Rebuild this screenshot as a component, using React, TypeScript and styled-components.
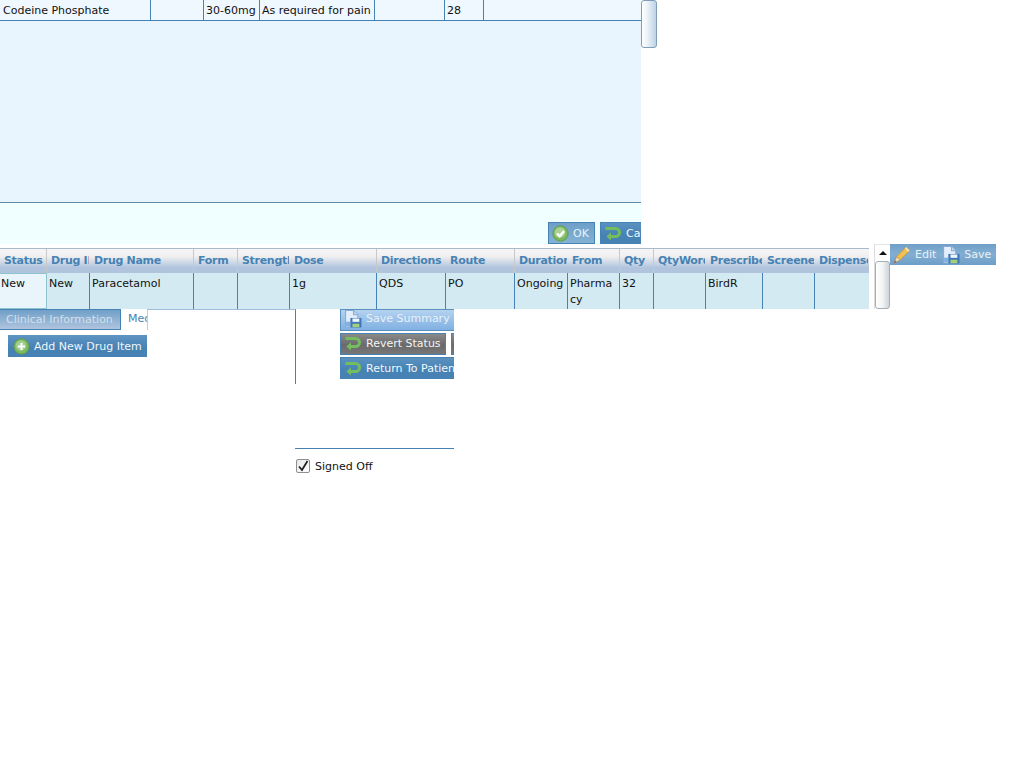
import styled, { createGlobalStyle } from "styled-components";

const COLUMNS = "47px 43px 104px 44px 52px 87px 69px 69px 53px 52px 34px 52px 57px 52px 54px";

const GlobalStyle = createGlobalStyle`
  html, body {
    margin: 0;
    padding: 0;
    background: #fff;
    font-family: "DejaVu Sans", Verdana, sans-serif;
    font-size: 11px;
    color: #111;
  }
`;

const Page = styled.div`
  width: 1034px;
  height: 778px;
  overflow: hidden;
`;

const TopSection = styled.div`
  display: flex;
  align-items: flex-start;
`;

const DialogPanel = styled.div`
  width: 641px;
  overflow: hidden;
`;

const DialogRow = styled.div`
  display: grid;
  grid-template-columns: 151px 53px 56px 115px 70px 39px 1fr;
  height: 20px;
  background: #f0f8ff;
  border-bottom: 1px solid #4682b4;
`;

const DialogCell = styled.div<{ $last?: boolean }>`
  padding-left: 2px;
  line-height: 21px;
  white-space: nowrap;
  overflow: hidden;
  border-right: ${(p) => (p.$last ? "none" : "1px solid #4682b4")};
  &:first-child {
    padding-left: 3px;
  }
`;

const DialogBody = styled.div`
  height: 181px;
  background: #e8f5ff;
  border-bottom: 1px solid #5b8aa6;
`;

const DialogFooter = styled.div`
  display: flex;
  gap: 5px;
  height: 22px;
  padding: 19px 0 0 548px;
  background: #f0ffff;
`;

const Thumb = styled.div<{ $height: number }>`
  box-sizing: border-box;
  width: 16px;
  height: ${(p) => p.$height}px;
  border: 1px solid #7f9db9;
  border-radius: 3px;
  background: linear-gradient(90deg, #fff 0%, #eef3f8 35%, #bcd2e6 100%);
`;

const toneStyles = {
  light: "background: linear-gradient(#6f9fc8, #84b2d4); border: 1px solid #4682b4; color: #eaf3fa;",
  steel: "background: linear-gradient(#5a92c0, #4682b4 60%); border: 1px solid #4682b4; color: #f2f7fb;",
  pale: "background: linear-gradient(#b4d2f0, #80b0e2); border: 1px solid #5a8fbe; color: #e8f0f8;",
  grey: "background: linear-gradient(#8a8a8a, #6a6a6a 55%, #777); border: 1px solid #4682b4; color: #f4f4f4;",
};

const ActionButton = styled.div<{ $tone: keyof typeof toneStyles; $width: number; $lift?: number }>`
  box-sizing: border-box;
  display: flex;
  flex: none;
  align-items: center;
  gap: 4px;
  width: ${(p) => p.$width}px;
  height: 22px;
  padding-left: 3px;
  padding-bottom: ${(p) => p.$lift ?? 0}px;
  white-space: nowrap;
  overflow: hidden;
  ${(p) => toneStyles[p.$tone]}
`;

const GridSection = styled.div`
  display: flex;
  align-items: flex-start;
  height: 65px;
`;

const DrugGrid = styled.div`
  width: 869px;
  margin-right: 5px;
  padding-top: 4px;
`;

const HeaderRow = styled.div`
  display: grid;
  grid-template-columns: ${COLUMNS};
  height: 25px;
  border-top: 1px solid #a9b9ca;
  background: linear-gradient(#f5f5f5 0%, #f0f0f0 30%, #b0c4de 78%);
  box-sizing: border-box;
`;

const HeaderCell = styled.div<{ $divider?: boolean }>`
  padding-left: 4px;
  font-weight: bold;
  letter-spacing: -0.3px;
  line-height: 23px;
  color: #4682b4;
  white-space: nowrap;
  overflow: hidden;
  border-right: 1px solid ${(p) => (p.$divider ? "#c8c8c8" : "transparent")};
`;

const DataRow = styled.div`
  display: grid;
  grid-template-columns: ${COLUMNS};
  height: 36px;
  background: #d4eaf3;
`;

const DataCell = styled.div<{ $selected?: boolean }>`
  padding: 3px 0 0 2px;
  line-height: 16px;
  border-right: 1px solid #4682b4;
  &:last-child {
    border-right: none;
  }
  ${(p) =>
    p.$selected &&
    "padding-left: 1px; background: #e9f5fb; border: 1px solid #8fc4cf; border-left: none; padding-top: 2px;"}
`;

const GridScroll = styled.div`
  box-sizing: border-box;
  flex: none;
  width: 16px;
  height: 65px;
  background: #fff;
  border-left: 1px solid #dcdcdc;
  border-top: 1px solid #e4e4e4;
`;

const ScrollArrow = styled.div`
  height: 16px;
  display: flex;
  align-items: center;
  justify-content: center;
  &::before {
    content: "";
    border-left: 4px solid transparent;
    border-right: 4px solid transparent;
    border-bottom: 4px solid #111;
  }
`;

const ScrollThumb = styled.div`
  box-sizing: border-box;
  width: 15px;
  height: 48px;
  border: 1px solid #a5adb5;
  border-radius: 3px;
  background: linear-gradient(90deg, #fff, #f2f4f5 50%, #ced4d9);
`;

const GridToolbar = styled.div`
  display: flex;
  align-items: center;
  gap: 6px;
  width: 106px;
  height: 21px;
  padding-left: 3px;
  box-sizing: border-box;
  background: linear-gradient(#6f9fc8, #82aed2 50%, #6d9ec8);
  color: #e8f1f8;
`;

const ToolbarItem = styled.div`
  display: flex;
  align-items: center;
  gap: 4px;
`;

const LowerSection = styled.div`
  display: flex;
  align-items: flex-start;
`;

const TabColumn = styled.div`
  width: 147px;
  flex: none;
  overflow: hidden;
`;

const TabStrip = styled.div`
  display: flex;
  height: 21px;
`;

const ClinicalTab = styled.div`
  box-sizing: border-box;
  flex: none;
  width: 121px;
  height: 21px;
  padding-left: 6px;
  line-height: 19px;
  white-space: nowrap;
  overflow: hidden;
  color: #d3e0ec;
  background: linear-gradient(#6f9fc8, #b0c4de);
  border: 1px solid #4682b4;
  border-left: none;
`;

const ActiveTab = styled.div`
  flex: none;
  padding-left: 7px;
  line-height: 20px;
  color: #4682b4;
  white-space: nowrap;
`;

const AddButtonRow = styled.div`
  padding: 5px 0 0 8px;
`;

const AddButton = styled.div`
  display: flex;
  align-items: center;
  gap: 4px;
  width: 150px;
  height: 22px;
  padding-left: 5px;
  white-space: nowrap;
  color: #f0f5fa;
  background: linear-gradient(#5e94c2, #4682b4 60%);
`;

const MissingPane = styled.div`
  box-sizing: border-box;
  flex: none;
  width: 149px;
  height: 75px;
  margin-right: -1px;
  background: #fff;
  border-top: 1px solid #9cc0dc;
  border-right: 1px solid #4682b4;
  position: relative;
  &::before {
    content: "";
    position: absolute;
    left: 0;
    top: 0;
    width: 1px;
    height: 20px;
    background: #b8d2e6;
  }
`;

const SummaryColumn = styled.div`
  flex: none;
  width: 159px;
  overflow: hidden;
`;

const ButtonStack = styled.div`
  display: flex;
  flex-direction: column;
  gap: 2px;
  height: 139px;
  padding-left: 45px;
  box-sizing: border-box;
`;

const ButtonLine = styled.div`
  display: flex;
  gap: 5px;
`;

const SignOffBar = styled.div`
  display: flex;
  align-items: center;
  gap: 5px;
  height: 36px;
  padding-left: 1px;
  border-top: 1px solid #4682b4;
  box-sizing: border-box;
`;

const CheckBox = styled.div`
  box-sizing: border-box;
  width: 14px;
  height: 14px;
  margin-top: -2px;
  border: 1px solid #8e8f8f;
  border-radius: 2px;
  background: linear-gradient(135deg, #e8e8e8, #fff);
`;

const CheckIcon = () => (
  <svg width="17" height="17" viewBox="0 0 16 16">
    <circle cx="8" cy="8" r="7.2" fill="#7cb860" stroke="#5c9a48" strokeWidth="0.8" />
    <circle cx="7.5" cy="7" r="5" fill="#a9d296" />
    <path d="M4.8 8l2.4 2.6L11.4 5.6" fill="none" stroke="#fff" strokeWidth="2.2" />
  </svg>
);

const PlusIcon = () => (
  <svg width="17" height="17" viewBox="0 0 16 16">
    <circle cx="8" cy="8" r="7.2" fill="#7cb860" stroke="#5c9a48" strokeWidth="0.8" />
    <circle cx="7.5" cy="7" r="5" fill="#a0ce8c" />
    <path d="M8 4.6v6.8M4.6 8h6.8" stroke="#fff" strokeWidth="2" />
  </svg>
);

const ReturnIcon = () => (
  <svg width="18" height="16" viewBox="0 0 18 16">
    <path
      d="M1.5 3.5h10a3.8 3.8 0 0 1 0 8H5"
      fill="none"
      stroke="#74bd5e"
      strokeWidth="3"
    />
    <path d="M7 7.2L2.4 11.5 7 15.6z" fill="#74bd5e" />
  </svg>
);

const SaveIcon = () => (
  <svg width="18" height="18" viewBox="0 0 17 17">
    <path d="M1.5 .5h7.5l4 4v11.5H1.5z" fill="#e4eefa" stroke="#86a9d6" />
    <path d="M9 .5v4h4" fill="#c2d6f0" stroke="#86a9d6" />
    <rect x="2" y="11" width="4" height="4.5" fill="#7fb0e6" />
    <rect x="6" y="7.5" width="10.5" height="9" fill="#3f78b8" />
    <rect x="8" y="8" width="6.5" height="3.2" fill="#eef4fb" />
    <rect x="8" y="13" width="6.5" height="3.2" fill="#a6d078" />
  </svg>
);

const PencilIcon = () => (
  <svg width="18" height="18" viewBox="0 0 17 17">
    <path d="M3.5 10L12.5 1l3.2 3.2L6.7 13.2z" fill="#f0c050" stroke="#cf9830" strokeWidth="0.8" />
    <path d="M12.5 1l3.2 3.2-1.4 1.4-3.2-3.2z" fill="#f6e2ae" />
    <path d="M3.5 10L1 16l6-2.8z" fill="#f2dcb8" stroke="#a88858" strokeWidth="0.6" />
    <path d="M1.9 13.8L1 16l2.3-1z" fill="#a04030" />
  </svg>
);

const gridHeaders: [string, boolean][] = [
  ["Status", true],
  ["Drug ID", false],
  ["Drug Name", true],
  ["Form", true],
  ["Strength", false],
  ["Dose", true],
  ["Directions", false],
  ["Route", true],
  ["Duration", false],
  ["From", true],
  ["Qty", true],
  ["QtyWords", false],
  ["Prescriber", false],
  ["Screened", false],
  ["Dispensed", false],
];

const gridValues = ["New", "New", "Paracetamol", "", "", "1g", "QDS", "PO", "Ongoing", "Pharma\u200Bcy", "32", "", "BirdR", "", ""];

const topRowValues = ["Codeine Phosphate", "", "30-60mg", "As required for pain", "", "28", ""];

export default function App() {
  return (
    <Page>
      <GlobalStyle />
      <TopSection>
        <DialogPanel>
          <DialogRow>
            {topRowValues.map((value, i) => (
              <DialogCell key={i} $last={i === topRowValues.length - 1}>
                {value}
              </DialogCell>
            ))}
          </DialogRow>
          <DialogBody />
          <DialogFooter>
            <ActionButton $tone="light" $width={47}>
              <CheckIcon />
              OK
            </ActionButton>
            <ActionButton $tone="steel" $width={80}>
              <ReturnIcon />
              Cancel
            </ActionButton>
          </DialogFooter>
        </DialogPanel>
        <Thumb $height={48} />
      </TopSection>

      <GridSection>
        <DrugGrid>
          <HeaderRow>
            {gridHeaders.map(([label, divider]) => (
              <HeaderCell key={label} $divider={divider}>
                {label}
              </HeaderCell>
            ))}
          </HeaderRow>
          <DataRow>
            {gridValues.map((value, i) => (
              <DataCell key={i} $selected={i === 0}>
                {value}
              </DataCell>
            ))}
          </DataRow>
        </DrugGrid>
        <GridScroll>
          <ScrollArrow />
          <ScrollThumb />
        </GridScroll>
        <GridToolbar>
          <ToolbarItem>
            <PencilIcon />
            Edit
          </ToolbarItem>
          <ToolbarItem>
            <SaveIcon />
            Save
          </ToolbarItem>
        </GridToolbar>
      </GridSection>

      <LowerSection>
        <TabColumn>
          <TabStrip>
            <ClinicalTab>Clinical Information</ClinicalTab>
            <ActiveTab>Medication</ActiveTab>
          </TabStrip>
          <AddButtonRow>
            <AddButton>
              <PlusIcon />
              Add New Drug Item
            </AddButton>
          </AddButtonRow>
        </TabColumn>
        <MissingPane />
        <SummaryColumn>
          <ButtonStack>
            <ButtonLine>
              <ActionButton $tone="pale" $width={160} $lift={3}>
                <SaveIcon />
                Save Summary
              </ActionButton>
            </ButtonLine>
            <ButtonLine>
              <ActionButton $tone="grey" $width={106} $lift={2}>
                <ReturnIcon />
                Revert Status
              </ActionButton>
              <ActionButton $tone="grey" $width={60} />
            </ButtonLine>
            <ButtonLine>
              <ActionButton $tone="steel" $width={160}>
                <ReturnIcon />
                Return To Patient
              </ActionButton>
            </ButtonLine>
          </ButtonStack>
          <SignOffBar>
            <CheckBox>
              <svg width="12" height="12" viewBox="0 0 12 12">
                <path d="M2 6.5L5 10 10.5 1" fill="none" stroke="#222" strokeWidth="1.8" />
              </svg>
            </CheckBox>
            Signed Off
          </SignOffBar>
        </SummaryColumn>
      </LowerSection>
    </Page>
  );
}
